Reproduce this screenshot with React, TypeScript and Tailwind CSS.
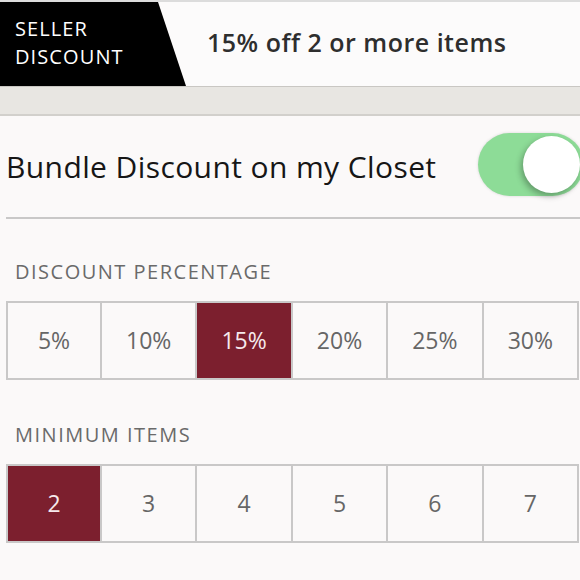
import { useState } from 'react';

const percents = ['5%', '10%', '15%', '20%', '25%', '30%'];
const minItems = ['2', '3', '4', '5', '6', '7'];

function Segments({ options, value, onPick }: { options: string[]; value: string; onPick: (v: string) => void }) {
  return (
    <div className="ml-[6px] mr-[1px] grid grid-cols-[92px_repeat(5,minmax(0,1fr))] border-2 border-[#c9c8c8]">
      {options.map((opt, i) => (
        <button
          key={opt}
          onClick={() => onPick(opt)}
          className={`h-[75px] flex items-center justify-center text-[23px] ${i > 0 ? 'border-l-2 border-[#c9c8c8]' : ''} ${
            opt === value ? 'bg-[#7c1f2e] text-[#f6e9ec]' : 'text-[#666666]'
          }`}
        >
          {opt}
        </button>
      ))}
    </div>
  );
}

export default function App() {
  const [on, setOn] = useState(true);
  const [pct, setPct] = useState('15%');
  const [min, setMin] = useState('2');

  return (
    <div className="w-[580px] h-[580px] overflow-hidden bg-[#fbf9f9] font-['Open_Sans',sans-serif]">
      {/* header */}
      <div className="h-[87px] flex border-t-2 border-b border-t-[#dcdcdc] border-b-[#c9c7c3] bg-[#fcfbfb]">
        <div className="w-[186px] bg-black text-white text-[20px] leading-[28px] tracking-[1.1px] pl-[15px] pt-[13px] [clip-path:polygon(0_0,158px_0,186px_100%,0_100%)]">
          <div>SELLER</div>
          <div>DISCOUNT</div>
        </div>
        <div className="flex-1 flex items-center pl-[21px] pb-[3px] text-[25px] tracking-[0.5px] font-semibold text-[#2e2e2e]">
          15% off 2 or more items
        </div>
      </div>
      <div className="h-[29px] bg-[#e8e6e2] border-b-2 border-[#d2d0cc]" />

      {/* toggle row */}
      <div className="h-[101px] flex items-center justify-between pl-[6px]">
        <span className="text-[30px] tracking-[0.4px] text-[#161616]">Bundle Discount on my Closet</span>
        <button
          onClick={() => setOn(!on)}
          className={`relative shrink-0 -mr-[4px] mb-[4px] w-[106px] h-[63px] rounded-full shadow-[0_0_3px_rgba(0,0,0,0.15)] ${
            on ? 'bg-[#8ddc97]' : 'bg-[#e5e5e5]'
          }`}
        >
          <span
            className={`absolute top-[3px] w-[57px] h-[57px] rounded-full bg-white shadow-[-2px_3px_6px_rgba(0,0,0,0.3)] ${
              on ? 'left-[45px]' : 'left-[3px]'
            }`}
          />
        </button>
      </div>
      <div className="ml-[6px] h-[2px] bg-[#c9c8c8]" />

      {/* discount percentage */}
      <div className="pl-[15px] pt-[40px] pb-[16px] text-[20px] leading-[26px] tracking-[1.5px] text-[#6a6a6a]">DISCOUNT PERCENTAGE</div>
      <Segments options={percents} value={pct} onPick={setPct} />

      {/* minimum items */}
      <div className="pl-[15px] pt-[42px] pb-[16px] text-[20px] leading-[26px] tracking-[1.5px] text-[#6a6a6a]">MINIMUM ITEMS</div>
      <Segments options={minItems} value={min} onPick={setMin} />
    </div>
  );
}
